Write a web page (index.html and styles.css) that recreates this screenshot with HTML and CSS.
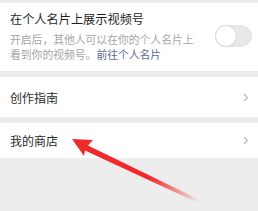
FILE: index.html
```html
<!DOCTYPE html>
<html lang="zh">
<head>
<meta charset="utf-8">
<link rel="stylesheet" href="styles.css">
</head>
<body>
<div class="page">
  <div class="card setting">
    <div class="setting-text">
      <div class="title">在个人名片上展示视频号</div>
      <div class="desc">
        <div class="desc-line">开启后，其他人可以在你的个人名片上</div>
        <div class="desc-line">看到你的视频号。<span class="link">前往个人名片</span></div>
      </div>
    </div>
    <div class="toggle"><div class="knob"></div></div>
  </div>
  <div class="card row row-tall">
    <span class="label">创作指南</span>
    <svg class="chev" width="6" height="9" viewBox="0 0 6 9"><path d="M1 1 L4.5 4.5 L1 8" fill="none" stroke="#b8b8b8" stroke-width="1.2"/></svg>
  </div>
  <div class="card row row-short">
    <span class="label">我的商店</span>
    <svg class="chev" width="6" height="9" viewBox="0 0 6 9"><path d="M1 1 L4.5 4.5 L1 8" fill="none" stroke="#b8b8b8" stroke-width="1.2"/></svg>
  </div>
</div>
<svg class="arrow" width="258" height="211" viewBox="0 0 258 211">
  <defs>
    <linearGradient id="fade" gradientUnits="userSpaceOnUse" x1="150" y1="178" x2="200" y2="201">
      <stop offset="0" stop-color="#f02a2a" stop-opacity="1"/>
      <stop offset="1" stop-color="#f02a2a" stop-opacity="0"/>
    </linearGradient>
  </defs>
  <polygon fill="url(#fade)" points="72,139 93,140 88,145.5 198,199 196,202 85,150.5 84,156"/>
</svg>
</body>
</html>
```

FILE: styles.css
```css
html, body {
  margin: 0;
  padding: 0;
}
body {
  width: 258px;
  height: 211px;
  background: #ededed;
  font-family: "Noto Sans CJK SC", "Noto Sans", sans-serif;
  overflow: hidden;
  position: relative;
}
.page {
  padding-top: 3px;
  display: flex;
  flex-direction: column;
  gap: 6px;
}
.card {
  background: #ffffff;
}
.setting {
  display: flex;
  align-items: center;
  padding: 7px 6px 9px 10px;
  height: 52px;
}
.setting-text {
  flex: 1;
  display: flex;
  flex-direction: column;
  gap: 4px;
}
.title {
  font-size: 12.2px;
  line-height: 18px;
  color: #1f1f1f;
}
.desc {
  font-size: 10.8px;
  line-height: 15px;
  color: #a6a6a6;
}
.desc-line {
  white-space: nowrap;
}
.link {
  color: #586b96;
}
.toggle {
  width: 37px;
  height: 22px;
  border-radius: 11px;
  background: #e9e9e9;
  box-sizing: border-box;
  border: 1px solid #e2e2e2;
  display: flex;
  align-items: center;
}
.knob {
  width: 20px;
  height: 20px;
  border-radius: 50%;
  background: #ffffff;
  box-shadow: 0 0 0 1px #dcdcdc, 0 1px 2px rgba(0,0,0,0.12);
}
.row {
  display: flex;
  align-items: center;
  justify-content: space-between;
  padding: 0 9px 0 10px;
}
.row-tall {
  height: 40px;
}
.row-short {
  height: 35px;
}
.label {
  font-size: 12px;
  color: #2a2a2a;
}
.chev {
  display: block;
}
.arrow {
  position: absolute;
  left: 0;
  top: 0;
}
```
